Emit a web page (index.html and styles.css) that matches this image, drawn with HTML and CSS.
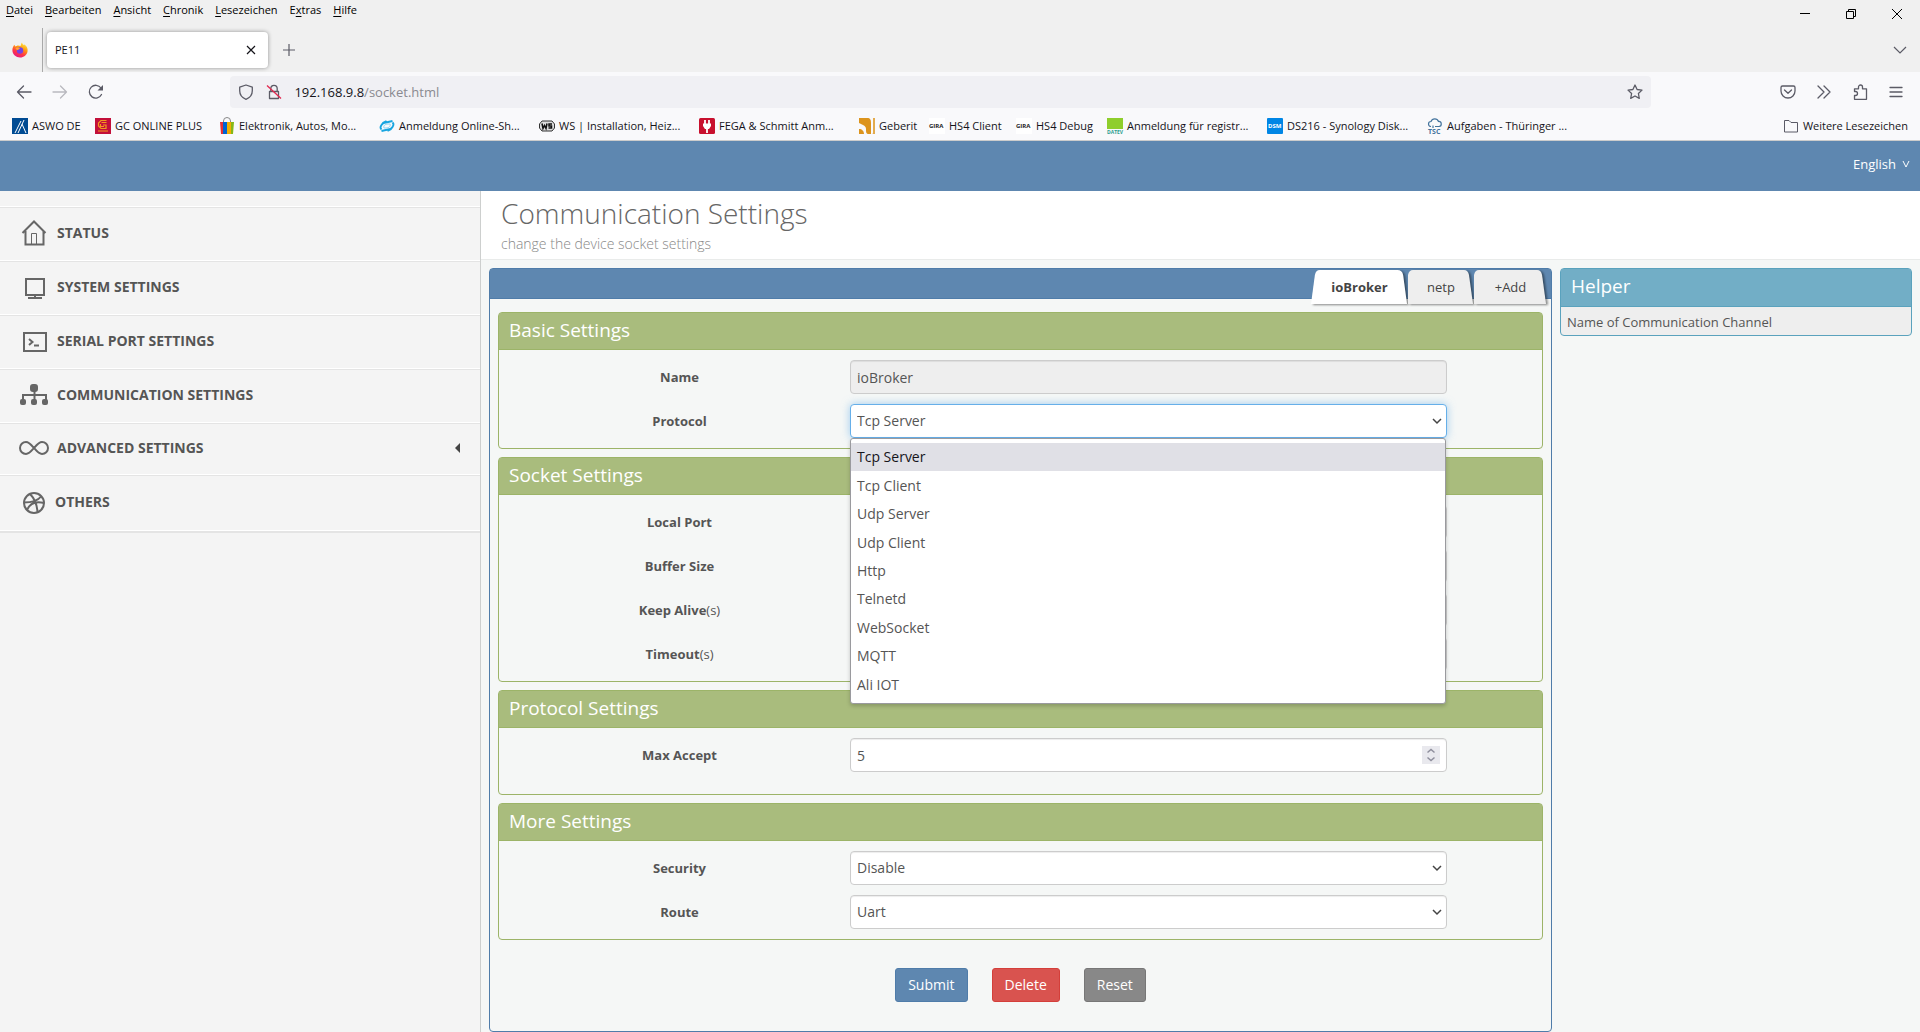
FILE: index.html
```html
<!DOCTYPE html>
<html lang="en">
<head>
<meta charset="utf-8">
<title>PE11</title>
<link rel="stylesheet" href="styles.css">
</head>
<body>
<div class="browser">
  <div class="titlebar">
    <nav class="menubar">
      <button><u>D</u>atei</button><button><u>B</u>earbeiten</button><button><u>A</u>nsicht</button><button><u>C</u>hronik</button><button><u>L</u>esezeichen</button><button>E<u>x</u>tras</button><button><u>H</u>ilfe</button>
    </nav>
    <div class="window-buttons">
      <button aria-label="Minimize"><svg width="12" height="12" viewBox="0 0 12 12"><path d="M1 5.5h10" stroke="#000" fill="none"/></svg></button>
      <button aria-label="Restore"><svg width="12" height="12" viewBox="0 0 12 12"><path d="M1.5 3.500h7v7h-7zM3.500 3.500v-2h7v7h-2" stroke="#000" fill="none"/></svg></button>
      <button aria-label="Close"><svg width="12" height="12" viewBox="0 0 12 12"><path d="M1 1l10 10M11 1L1 11" stroke="#000" fill="none"/></svg></button>
    </div>
  </div>
  <div class="tabstrip">
    <button class="pinned" aria-label="Firefox">
      <svg width="16" height="16" viewBox="0 0 16 16"><defs><linearGradient id="fx" x1=".8" y1="0" x2=".3" y2="1"><stop offset="0" stop-color="#fff44f"/><stop offset=".4" stop-color="#ff980e"/><stop offset=".7" stop-color="#ff3647"/><stop offset="1" stop-color="#e31587"/></linearGradient></defs><path d="M10 .4c.3 1.400 1.200 2 2 2.900 0-.4 0-.8-.1-1.100C14.500 3.700 16 6 15.600 9c-.5 3.900-3.700 6.600-7.600 6.600S.5 12.600.4 8.600C.3 6.300 1.200 4 2.600 2.800L3 4.600c.5-.5 1.100-.7 1.700-.7C6 3.200 7.500 3.800 8.500 4 9 2.800 9 1.500 10 .4z" fill="url(#fx)"/><circle cx="8" cy="8.500" r="3.200" fill="#7542e5"/><path d="M3.500 6.500C5 5 7 5.300 8.300 6.500 7 6.600 6.500 7 6.400 8 5.300 8 4.300 7.600 3.500 6.500z" fill="#ffa436"/></svg>
    </button>
    <div class="tab"><span>PE11</span><button aria-label="Close tab"><svg width="10" height="10" viewBox="0 0 10 10"><path d="M1 1l8 8M9 1L1 9" stroke="#15141a" stroke-width="1.200"/></svg></button></div>
    <button class="newtab" aria-label="New tab"><svg width="12" height="12" viewBox="0 0 12 12"><path d="M6 0v12M0 6h12" stroke="#5b5b66" stroke-width="1.200"/></svg></button>
    <button class="alltabs" aria-label="List all tabs"><svg width="14" height="10" viewBox="0 0 14 10"><path d="M1 2l6 6 6-6" stroke="#5b5b66" stroke-width="1.200" fill="none"/></svg></button>
  </div>
  <div class="toolbar">
    <div class="nav-buttons">
      <button aria-label="Back"><svg width="16" height="16" viewBox="0 0 16 16"><path d="M15 8H1.500M7.500 2l-6 6 6 6" class="ic"/></svg></button>
      <button aria-label="Forward" class="off"><svg width="16" height="16" viewBox="0 0 16 16"><path d="M1 8h13.500M8.500 2l6 6-6 6" class="ic"/></svg></button>
      <button aria-label="Reload"><svg width="16" height="16" viewBox="0 0 16 16"><path d="M13.500 10.500A6.400 6.400 0 1 1 13 4" class="ic"/><path d="M15 1v5.500H9.500z" fill="#5b5b66"/></svg></button>
    </div>
    <div class="urlbar">
      <svg width="16" height="16" viewBox="0 0 16 16"><path d="M8 1l6.300 2.200v3.600C14.300 10.500 12 13.800 8 15.300 4 13.800 1.700 10.500 1.700 6.800V3.200z" class="ic"/></svg>
      <svg width="16" height="16" viewBox="0 0 16 16"><path d="M3.500 7.500h9v7h-9zM4.800 7.500V4.500a3.200 3.200 0 0 1 6.400 0v3" class="ic"/><path d="M1 1.500l14 13" stroke="#e22850" stroke-width="1.300"/></svg>
      <span class="url"><b>192.168.9.8</b>/socket.html</span>
      <svg width="16" height="16" viewBox="0 0 16 16"><path d="M8 1l2.100 4.500 4.900.6-3.600 3.400.9 4.900L8 12l-4.300 2.400.9-4.900L1 6.100l4.900-.6z" class="ic"/></svg>
    </div>
    <div class="tools">
      <button aria-label="Pocket"><svg width="16" height="16" viewBox="0 0 16 16"><path d="M2.500 2h11a1.500 1.500 0 0 1 1.500 1.500V7A7 7 0 0 1 1 7V3.500A1.500 1.500 0 0 1 2.500 2zM4.500 6L8 9.300 11.500 6" class="ic"/></svg></button>
      <button aria-label="More tools"><svg width="16" height="16" viewBox="0 0 16 16"><path d="M2 2l6 6-6 6M8 2l6 6-6 6" class="ic"/></svg></button>
      <button aria-label="Extensions"><svg width="16" height="16" viewBox="0 0 16 16"><path d="M2.500 15.300V11.500h1a2 2 0 0 0 0-4h-1V4.800h4V3a2 2 0 0 1 4 0v1.800h4v10.500z" class="ic"/></svg></button>
      <button aria-label="Menu"><svg width="16" height="16" viewBox="0 0 16 16"><path d="M2 3.500h12M2 8h12M2 12.500h12" class="ic"/></svg></button>
    </div>
  </div>
  <nav class="bookmarks">
    <a href="#" class="w-aswo"><svg width="16" height="16" viewBox="0 0 16 16"><path d="M0 0h16v16H0z" fill="#004b93"/><path d="M3 15L9 3M6 15l6-13M10 6l4 9" stroke="#fff" stroke-width="1" fill="none"/></svg>ASWO DE</a>
    <a href="#" class="w-gc"><svg width="16" height="16" viewBox="0 0 16 16"><path d="M0 0h16v16H0z" fill="#c3103a"/><path d="M11.500 2.500H6L3.500 5v3L6 10.500h5V7H8M6.500 4.500h5M5.500 6v2.500H9M3 13h10" stroke="#f39a1e" stroke-width="1.200" fill="none"/></svg>GC ONLINE PLUS</a>
    <a href="#" class="long"><svg width="16" height="16" viewBox="0 0 16 16"><path d="M4.500 5V3a3 3 0 0 1 7 0v2" stroke="#888" fill="none"/><path d="M1 4h4v12H2z" fill="#e53238"/><path d="M4 4h4v12H4z" fill="#0064d2"/><path d="M8 4h4v12H8z" fill="#f5af02"/><path d="M12 4h3l-1 12h-2z" fill="#86b817"/></svg>Elektronik, Autos, Mo...</a>
    <a href="#" class="long"><svg width="16" height="16" viewBox="0 0 16 16"><path d="M2.500 11.500C0 9.500 3 4.500 7 4.500l6.500-1.500M13.500 4.500C16 6.500 13 11.500 9 11.500L2.500 13M3.500 5l4-2M12.500 11l-4 2" stroke="#18a5e0" stroke-width="1.800" fill="none"/><path d="M5 10c-1-2 1-4 4-4h2c1 2-1 4-4 4z" fill="none" stroke="#8fd3f2"/></svg>Anmeldung Online-Sh...</a>
    <a href="#" class="long"><svg width="16" height="16" viewBox="0 0 16 16"><path d="M3 3h10l2.500 3v4L13 13H3L.5 10V6z" fill="#ddd" stroke="#333"/><path d="M3 5.500l1 5 1.500-3 1.500 3 1-5M13 6h-3v2h2.500v2H9.500" stroke="#111" stroke-width="1.500" fill="none"/></svg>WS | Installation, Heiz...</a>
    <a href="#" class="long"><svg width="16" height="16" viewBox="0 0 16 16"><rect width="16" height="16" rx="1.500" fill="#c8102e"/><path d="M6 2v4M10 2v4M8 10v5" stroke="#fff" stroke-width="1.800"/><path d="M4 5.500h8v2.500l-2 3H6L4 8z" fill="#fff"/></svg>FEGA &amp; Schmitt Anm...</a>
    <a href="#" class="w-geb"><svg width="16" height="16" viewBox="0 0 16 16"><path d="M0 0h8c3.500 0 4 2 4 5v11h-2c-3 0-3-2-3-5 0-2-1-3-3-4L0 5zM0 11c3 0 5 2 5 5H0z" fill="#dc941d"/><path d="M14 0h2v16h-3c1 0 1-1 1-2z" fill="#e3ab4d"/></svg>Geberit</a>
    <a href="#" class="w-gira"><svg width="16" height="16" viewBox="0 0 16 16"><path d="M0 0h16v16H0z" fill="#fff"/><text x="0" y="10" class="logo-gira">GIRA</text></svg>HS4 Client</a>
    <a href="#" class="w-gira2"><svg width="16" height="16" viewBox="0 0 16 16"><path d="M0 0h16v16H0z" fill="#fff"/><text x="0" y="10" class="logo-gira">GIRA</text></svg>HS4 Debug</a>
    <a href="#" class="long"><svg width="16" height="16" viewBox="0 0 16 16"><path d="M0 0h16v11H0z" fill="#8fce2c"/><text x="0" y="16" class="logo-datev">DATEV</text></svg>Anmeldung für registr...</a>
    <a href="#" class="long"><svg width="16" height="16" viewBox="0 0 16 16"><rect width="16" height="16" rx="1" fill="#0086e5"/><text x="1" y="10" class="logo-dsm">DSM</text></svg>DS216 - Synology Disk...</a>
    <a href="#" class="long"><svg width="16" height="16" viewBox="0 0 16 16"><path d="M4 8.500a2.500 2.500 0 0 1 0-5 4 4 0 0 1 7.500 0 2.500 2.500 0 0 1 .5 5H8M6 10V7.500" stroke="#44749d" stroke-width="1.200" fill="none"/><text x="1" y="16" class="logo-tsc">TSC</text></svg>Aufgaben - Thüringer ...</a>
    <a href="#" class="more"><svg width="16" height="16" viewBox="0 0 16 16"><path d="M1.500 14V2.500h4.500l2 2h6.500V14z" stroke="#5b5b66" fill="none" stroke-linejoin="round"/></svg>Weitere Lesezeichen</a>
  </nav>
</div>

<header class="topbar"><button class="lang">English <svg width="8" height="8" viewBox="0 0 8 8"><path d="M1 1l3 6 3-6" stroke="#fff" fill="none"/></svg></button></header>

<div class="layout">
  <nav class="sidebar">
    <a href="#"><svg width="30" height="28" viewBox="0 0 30 28"><path d="M3.500 14L15 2.500 26.500 14M6.500 12v13.500h18V12" class="st"/><path d="M12.500 25V14.500h5V25" class="st thin"/></svg>STATUS</a>
    <a href="#"><svg width="30" height="28" viewBox="0 0 30 28"><path d="M7 6h18v16H7zM9 25h14M16 22v3" class="st"/></svg>SYSTEM SETTINGS</a>
    <a href="#"><svg width="30" height="28" viewBox="0 0 30 28"><path d="M5 6h22v18H5zM10 12l3.500 3-3.500 3M15 18.500h5" class="st"/></svg>SERIAL PORT SETTINGS</a>
    <a href="#"><svg width="30" height="28" viewBox="0 0 30 28"><path d="M4 19v-5h23v5M15.500 8v11" class="st"/><g fill="#666"><rect x="11" y="3" width="8" height="8" rx="3"/><rect x="1" y="18" width="6" height="6" rx="2"/><rect x="12" y="18" width="6" height="6" rx="2"/><rect x="23" y="18" width="6" height="6" rx="2"/></g></svg>COMMUNICATION SETTINGS</a>
    <a href="#" class="short"><svg width="30" height="28" viewBox="0 0 30 28"><path d="M15 14c-3-3.500-5-6-8-6a6 6 0 0 0 0 12c3 0 5-2.500 8-6s5-6 8-6a6 6 0 0 1 0 12c-3 0-5-2.500-8-6z" class="st"/></svg>ADVANCED SETTINGS<svg class="arrow" width="6" height="10" viewBox="0 0 6 10"><path d="M5 0v10L0 5z" fill="#444"/></svg></a>
    <a href="#" class="tall"><svg width="28" height="28" viewBox="0 0 28 28"><circle cx="15" cy="15" r="10" class="st"/><path d="M5 14.500c8 0 14-2 17-6M11 6c5 5 7 11 7.500 18M8 22c3-7 9-9 17-7" class="st"/></svg>OTHERS</a>
  </nav>

  <main class="main">
    <div class="page-title">
      <h1>Communication Settings</h1>
      <p>change the device socket settings</p>
    </div>
    <div class="content">
      <form class="channel">
        <div class="tabs">
          <button type="button" class="active"><svg preserveAspectRatio="none" viewBox="0 0 100 34"><path d="M0 34L4 5Q5 0 9 0H89Q94 0 95 5L99 34z"/></svg><span>ioBroker</span></button>
          <button type="button"><svg preserveAspectRatio="none" viewBox="0 0 66 34"><path d="M0 34V5Q1 0 5 0H56Q60 0 61 5L65 34z"/></svg><span>netp</span></button>
          <button type="button"><svg preserveAspectRatio="none" viewBox="0 0 74 34"><path d="M0 34V5Q1 0 5 0H64Q68 0 69 5L73 34z"/></svg><span>+Add</span></button>
        </div>
        <section class="panel">
          <h2>Basic Settings</h2>
          <div class="row"><label for="name">Name</label><input id="name" type="text" value="ioBroker" readonly></div>
          <div class="row"><label for="protocol">Protocol</label>
            <div class="select open">
              <select id="protocol"><option>Tcp Server</option></select>
              <svg width="10" height="8" viewBox="0 0 10 8"><path d="M1 2l4 4 4-4"/></svg>
              <ul class="options" role="listbox">
                <li class="current" role="option">Tcp Server</li><li role="option">Tcp Client</li><li role="option">Udp Server</li><li role="option">Udp Client</li><li role="option">Http</li><li role="option">Telnetd</li><li role="option">WebSocket</li><li role="option">MQTT</li><li role="option">Ali IOT</li>
              </ul>
            </div>
          </div>
        </section>
        <section class="panel">
          <h2>Socket Settings</h2>
          <div class="row"><label for="port">Local Port</label><input id="port" type="text"></div>
          <div class="row"><label for="buffer">Buffer Size</label><input id="buffer" type="text"></div>
          <div class="row"><label for="alive">Keep Alive<span>(s)</span></label><input id="alive" type="text"></div>
          <div class="row"><label for="timeout">Timeout<span>(s)</span></label><input id="timeout" type="text"></div>
        </section>
        <section class="panel roomy">
          <h2>Protocol Settings</h2>
          <div class="row"><label for="max">Max Accept</label>
            <div class="number"><input id="max" type="number" value="5"><svg width="18" height="18" viewBox="0 0 18 18"><path d="M0 0h18v18H0z" fill="#e9e9ee"/><path d="M5.500 6.500L9 3.500l3.500 3M5.500 11.500l3.500 3 3.500-3" stroke="#8f8f9d" stroke-width="1.500" fill="none"/></svg></div>
          </div>
        </section>
        <section class="panel">
          <h2>More Settings</h2>
          <div class="row"><label for="security">Security</label><div class="select"><select id="security"><option>Disable</option></select><svg width="10" height="8" viewBox="0 0 10 8"><path d="M1 2l4 4 4-4"/></svg></div></div>
          <div class="row"><label for="route">Route</label><div class="select"><select id="route"><option>Uart</option></select><svg width="10" height="8" viewBox="0 0 10 8"><path d="M1 2l4 4 4-4"/></svg></div></div>
        </section>
        <div class="actions">
          <button type="button" class="submit">Submit</button>
          <button type="button" class="delete">Delete</button>
          <button type="button" class="reset">Reset</button>
        </div>
      </form>
      <aside class="helper">
        <h2>Helper</h2>
        <p>Name of Communication Channel</p>
      </aside>
    </div>
  </main>
</div>
</body>
</html>
```
FILE: styles.css
```css
* { box-sizing: border-box; }
body { margin: 0; min-height: 100vh; display: flex; flex-direction: column; font: 14px/20px "Open Sans", sans-serif; color: #555; background: #f5f7f6; }
button { border: 0; padding: 0; background: none; font: inherit; color: inherit; display: flex; align-items: center; justify-content: center; }
a { color: inherit; text-decoration: none; }
h1, h2, p, ul { margin: 0; padding: 0; font-weight: 400; }
svg { flex: none; }

/* browser window */
.browser { font-size: 11px; line-height: 16px; color: #15141a; background: #f0f0f0; border-bottom: 1px solid #ccc; }
.titlebar { display: flex; justify-content: space-between; height: 28px; }
.menubar { display: flex; align-items: flex-start; gap: 12px; padding: 2px 6px; color: #000; }
.menubar u { text-underline-offset: 2px; }
.window-buttons { display: flex; }
.window-buttons button { width: 46px; height: 28px; }
.tabstrip { display: flex; align-items: center; height: 44px; }
.pinned { width: 43px; height: 44px; padding-right: 3px; border-right: 1px solid #aaa; }
.tab { display: flex; align-items: center; justify-content: space-between; width: 221px; height: 36px; margin-left: 4px; padding: 0 12px 0 8px; border-radius: 4px; background: #fff; box-shadow: 0 0 4px rgba(0,0,0,.4); }
.newtab { width: 42px; height: 36px; }
.alltabs { margin-left: auto; width: 40px; height: 36px; }
.toolbar { display: flex; align-items: center; height: 40px; background: #f9f9fb; }
.ic { fill: none; stroke: #5b5b66; stroke-width: 1.300; stroke-linejoin: round; stroke-linecap: round; }
.nav-buttons { display: flex; gap: 20px; width: 12%; padding-left: 16px; }
.nav-buttons .off { opacity: .4; }
.urlbar { display: flex; align-items: center; gap: 12px; width: 74%; height: 32px; padding: 0 8px; border-radius: 4px; background: #f0f0f4; }
.url { flex: 1; font-size: 13px; color: #8a8a90; }
.url b { font-weight: 400; color: #15141a; }
.tools { display: flex; gap: 20px; padding-right: 16px; margin-left: auto; }
.bookmarks { display: flex; gap: 12px; height: 28px; padding: 0 12px; align-items: center; background: #f9f9fb; white-space: nowrap; }
.bookmarks a { display: flex; align-items: center; gap: 4px; }
.bookmarks svg { overflow: visible; }
.bookmarks .long { width: 148px; }
.w-aswo { width: 71px; }
.w-gc { width: 112px; }
.w-geb { width: 58px; }
.w-gira { width: 75px; }
.w-gira2 { width: 79px; }
.bookmarks .more { margin-left: auto; }
.logo-gira { font: bold 6px "Open Sans", sans-serif; fill: #222; }
.logo-datev { font: bold 5px "Open Sans", sans-serif; fill: #2a9d8f; }
.logo-dsm { font: bold 6px "Open Sans", sans-serif; fill: #fff; }
.logo-tsc { font: bold 7px "Open Sans", sans-serif; fill: #44749d; }

/* device page */
.topbar { display: flex; justify-content: flex-end; height: 50px; padding: 0 10px; background: #5e87b0; color: #fff; font-size: 13px; }
.lang { gap: 6px; height: 46px; }
.layout { display: flex; flex: 1; }
.sidebar { width: 25%; padding-top: 15px; background: #f4f4f4; }
.sidebar a { display: flex; align-items: center; gap: 8px; height: 54px; padding: 0 19px 2px; border-top: 1px solid #fff; box-shadow: inset 0 1px #e4e4e4; font-weight: 700; color: #555; }
.sidebar .short { height: 52px; }
.sidebar .tall { height: 56px; }
.sidebar::after { content: ""; display: block; height: 2px; background: #e4e4e4; border-top: 1px solid #fff; }
.st { fill: none; stroke: #666; stroke-width: 2; }
.thin { stroke-width: 1; }
.arrow { margin-left: auto; }
.main { flex: 1; min-width: 0; border-left: 1px solid #cdcfce; }
.page-title { height: 69px; padding: 4px 20px 0; background: #fff; border-bottom: 1px solid #e9ebea; color: #888; }
.page-title h1 { font-size: 28px; line-height: 36px; font-weight: 300; color: #666; }
.page-title p { line-height: 26px; font-weight: 300; }
.content { display: grid; grid-template-columns: minmax(0, 151fr) minmax(0, 50fr); gap: 8px; align-items: start; padding: 8px 8px 0; }
.channel { border: 1px solid #4f7ca9; border-radius: 4px; min-height: 764px; }
.tabs { display: flex; justify-content: flex-end; height: 30px; padding: 1px 4px 0 0; margin-bottom: 13px; background: #5e87b0; border-bottom: 1px solid #4f7ca9; }
.tabs button { position: relative; width: 66px; height: 34px; font-size: 13px; color: #444; }
.tabs button.active { width: 97px; font-weight: 700; }
.tabs button:last-child { width: 73px; }
.tabs svg { position: absolute; inset: 0; width: 100%; height: 100%; fill: #eee; overflow: visible; filter: drop-shadow(2px 1px 1px rgba(0,0,0,.45)); }
.tabs .active svg { fill: #fff; }
.tabs span { position: relative; }
.panel { margin: 0 8px 8px; padding-bottom: 10px; border: 1px solid #9cb468; border-radius: 4px; }
.panel.roomy { padding-bottom: 22px; }
h2 { font-size: 19px; line-height: 35px; color: #fff; }
.panel h2 { height: 37px; margin-bottom: 10px; padding: 0 10px; background: #a9bc7d; border-bottom: 1px solid #9cb468; }
.row { display: grid; grid-template-columns: 4fr 7fr 1fr; padding: 0 10px; align-items: center; }
.row + .row { margin-top: 10px; }
.row label { text-align: center; font-size: 13px; font-weight: 700; }
.row label span { font-weight: 400; }
.row input, .row select { display: block; width: 100%; height: 34px; padding: 0 6px; border: 1px solid #ccc; border-radius: 4px; background: #fff; box-shadow: inset 0 1px 1px rgba(0,0,0,.075); font: inherit; color: #555; appearance: none; outline: 0; }
.row input[readonly] { background: #eee; }
.row input[type=number] { appearance: textfield; }
.row input::-webkit-inner-spin-button { display: none; }
.select, .number { position: relative; }
.select > svg { position: absolute; right: 5px; top: 13px; fill: none; stroke: #444; stroke-width: 1.500; pointer-events: none; }
.number svg { position: absolute; right: 7px; top: 8px; }
.open select { border-color: #66afe9; box-shadow: 0 0 8px rgba(102,175,233,.6); }
.options { position: absolute; z-index: 2; top: 34px; left: 0; right: 1px; height: 266px; padding: 4px 0; display: grid; grid-auto-rows: 1fr; list-style: none; border: 1px solid #9a9a9e; border-radius: 3px; background: #fff; box-shadow: 0 2px 4px rgba(0,0,0,.2); }
.options li { display: flex; align-items: center; padding: 0 6px; }
.options .current { background: #e0e0e6; color: #15141a; }
.actions { display: flex; justify-content: center; gap: 24px; padding-top: 20px; }
.actions button { height: 34px; padding: 0 12px; border: 1px solid; border-radius: 3px; color: #fff; }
.actions .submit { background: #5e87b0; border-color: #4f7ca9; }
.actions .delete { background: #d9534f; border-color: #d43f3a; }
.actions .reset { background: #888; border-color: #777; }
.helper { border: 1px solid #5aa2bd; border-radius: 4px; background: #eee; }
.helper h2 { height: 38px; padding: 0 10px; background: #72aec6; border-bottom: 1px solid #5aa2bd; }
.helper p { padding: 5px 6px 3px; font-size: 13px; }
```
